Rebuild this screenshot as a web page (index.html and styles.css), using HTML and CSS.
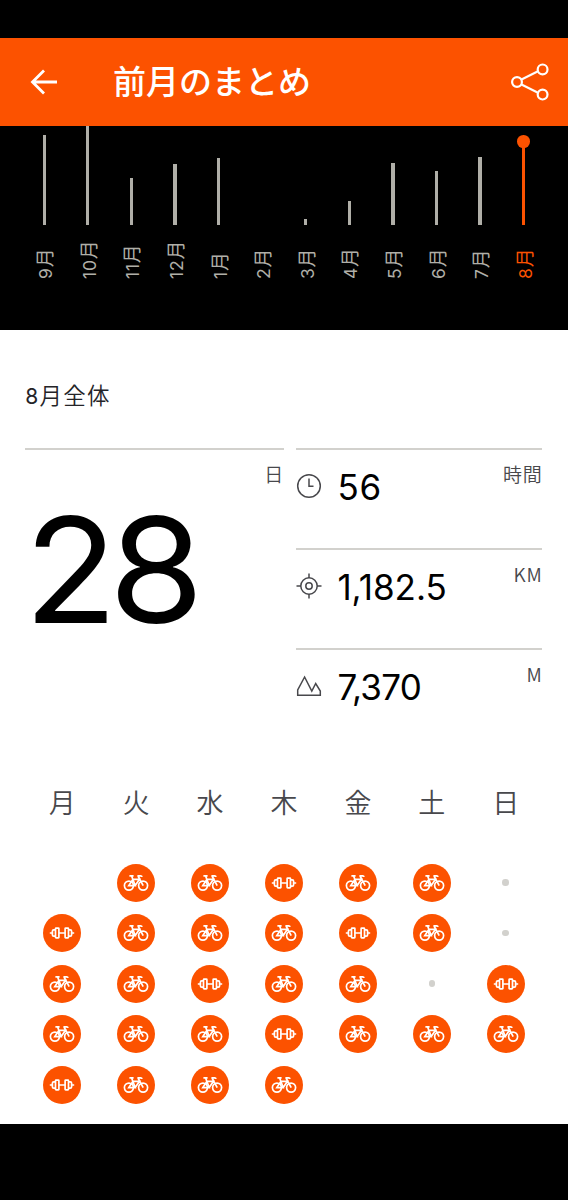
FILE: index.html
```html
<!DOCTYPE html>
<html lang="ja">
<head>
    <meta charset="UTF-8">
    <meta name="viewport" content="width=device-width, initial-scale=1.0">
    <title>前月のまとめ</title>
    <link rel="stylesheet" href="styles.css">
</head>
<body>
    <svg class="sprite" width="0" height="0">
        <symbol id="ride" viewBox="0 0 38 38">
            <circle cx="11.9" cy="21.6" r="4.5"/>
            <circle cx="26.1" cy="21.6" r="4.5"/>
            <path d="M12.4 11.9h4.2M14.6 12l3.6 9.6h-6.4l4.1-6.3h6.6l-4.3 6.3M20.4 11.9h3.2q1.3 0 1.3 1.2M21 12l5.2 9.6"/>
        </symbol>
        <symbol id="weights" viewBox="0 0 38 38">
            <path d="M16 19h6M6.8 19h2.2M29 19h2.2M12.4 15.8h-1.6q-1.4 0-1.4 1.4v3.6q0 1.4 1.4 1.4h1.6M25.6 15.8h1.6q1.4 0 1.4 1.4v3.6q0 1.4-1.4 1.4h-1.6"/>
            <rect x="12.5" y="14.2" width="3.4" height="9.6" rx="0.6"/>
            <rect x="22.1" y="14.2" width="3.4" height="9.6" rx="0.6"/>
        </symbol>
    </svg>

    <header class="app-bar">
        <svg class="back" width="28" height="28" viewBox="0 0 28 28">
            <path d="M27 14H3M14 2.5L2.5 14L14 25.5"/>
        </svg>
        <h1>前月のまとめ</h1>
        <svg class="share" width="40" height="40" viewBox="0 0 40 40">
            <path d="M11 17.8L27.5 9.6M11 22.2L27.5 30.4"/>
            <circle cx="7" cy="20" r="4.9"/>
            <circle cx="32.6" cy="7.4" r="4.9"/>
            <circle cx="32.6" cy="32.6" r="4.9"/>
        </svg>
    </header>

    <section class="chart" id="chart"></section>

    <main class="summary">
        <h2><span>8</span>月全体</h2>
        <div class="stats">
            <div class="days">
                <span class="unit">日</span>
                <span class="total">28</span>
            </div>
            <div class="totals">
                <div class="stat">
                    <svg width="26" height="26" viewBox="0 0 26 26">
                        <circle cx="13" cy="13" r="11.3"/>
                        <path d="M13 5.5V13.2H17.5"/>
                    </svg>
                    <span class="value time">56</span>
                    <span class="unit">時間</span>
                </div>
                <div class="stat">
                    <svg width="26" height="26" viewBox="0 0 26 26">
                        <circle cx="13" cy="13" r="8.2"/>
                        <circle cx="13" cy="13" r="3.2"/>
                        <path d="M13 .5V5M13 21v4.5M.5 13H5M21 13h4.5"/>
                    </svg>
                    <span class="value distance">1,182.5</span>
                    <span class="unit">KM</span>
                </div>
                <div class="stat">
                    <svg width="26" height="26" viewBox="0 0 26 26">
                        <path d="M1.7 22.2V17L8.6 4L15.8 18L19.7 10.5L24.3 18V22.2Z"/>
                    </svg>
                    <span class="value climb">7,370</span>
                    <span class="unit">M</span>
                </div>
            </div>
        </div>
        <div class="weekdays">
            <span>月</span><span>火</span><span>水</span><span>木</span><span>金</span><span>土</span><span>日</span>
        </div>
        <div class="calendar" id="calendar"></div>
    </main>

    <script>
        // Bar height in px for each month
        const months = [
            [9, 90.5], [10, 99], [11, 47.5], [12, 61], [1, 67], [2, 0],
            [3, 6], [4, 24], [5, 62.5], [6, 54], [7, 68], [8, 84]
        ];
        document.getElementById('chart').innerHTML = months.map(([month, height]) => `
            <div class="month ${month === 8 ? 'current' : ''}">
                <div class="bar" style="height: ${height}px"></div>
                <span class="label">${month}<b>月</b></span>
            </div>`).join('');

        // r = ride, w = weights, . = rest day, _ = outside the month
        const days = '_rrwrr.' + 'wrrrwr.' + 'rrwrr.w' + 'rrrwrrr' + 'wrrr___';
        const cells = {
            r: '<svg class="activity"><use href="#ride"/></svg>',
            w: '<svg class="activity"><use href="#weights"/></svg>',
            '.': '<i class="rest"></i>',
            _: ''
        };
        document.getElementById('calendar').innerHTML =
            [...days].map(d => `<div class="day">${cells[d]}</div>`).join('');
    </script>
</body>
</html>
```
FILE: styles.css
```css
* {
    box-sizing: border-box;
}
body {
    margin: 0;
    padding-top: 38px;
    height: 1200px;
    overflow: hidden;
    background: #000;
    font-family: Inter, "Noto Sans CJK JP", sans-serif;
}
svg {
    fill: none;
    stroke: currentColor;
}
.sprite {
    position: absolute;
}
h1, h2 {
    margin: 0;
}
.app-bar {
    display: flex;
    align-items: center;
    height: 88px;
    padding: 0 18px 0 30px;
    background: #fc5200;
    color: #fff;
}
.back {
    stroke-width: 2.8;
}
.app-bar h1 {
    margin-left: 55px;
    font-size: 33px;
    line-height: 48px;
    font-weight: 500;
}
.share {
    margin-left: auto;
    stroke-width: 2.2;
}
.chart {
    display: grid;
    grid-template-columns: repeat(12, 43.6px);
    grid-template-rows: 204px;
    padding-left: 22.4px;
    color: #b0afa8;
}
.month {
    display: flex;
    flex-direction: column;
    align-items: center;
}
.bar {
    flex: none;
    width: 3.3px;
    margin-top: auto;
    background: currentColor;
}
.label {
    flex: none;
    height: 54px;
    margin: 0 0 51px 4px;
    line-height: 24px;
    font-size: 17.5px;
    letter-spacing: 0.8px;
    writing-mode: vertical-rl;
    text-orientation: sideways;
    transform: rotate(180deg);
}
.label b {
    font-size: 19px;
    font-weight: 400;
}
.current {
    color: #fc5200;
}
.current .bar {
    position: relative;
}
.current .bar::before {
    content: "";
    position: absolute;
    top: -6px;
    left: -4.7px;
    width: 12.7px;
    height: 12.7px;
    border-radius: 50%;
    background: #fc5200;
}
.summary {
    height: 794px;
    padding: 48px 25.3px 0;
    background: #fff;
}
.summary h2 {
    height: 70px;
    font-size: 22.5px;
    line-height: 35px;
    font-weight: 350;
    letter-spacing: 1.2px;
    color: #242428;
}
.summary h2 span {
    font-size: 21px;
    font-weight: 400;
}
.stats {
    display: grid;
    grid-template-columns: 258.7px 246px;
    gap: 12.4px;
}
.days {
    display: flex;
    flex-direction: column;
    border-top: 2px solid #d2d1cd;
}
.unit {
    font-family: "Noto Sans CJK JP", sans-serif;
    font-size: 19px;
    line-height: 28px;
    font-weight: 350;
    letter-spacing: 0.7px;
    color: #48484c;
}
.days .unit {
    margin-top: 10px;
    text-align: right;
}
.total {
    margin: 2px 0 0 -1px;
    font-size: 146px;
    line-height: 160px;
    letter-spacing: -8px;
    transform: scaleX(1.05);
    transform-origin: left;
}
.stat {
    display: flex;
    align-items: flex-start;
    height: 100px;
    padding-top: 10px;
    border-top: 2px solid #d2d1cd;
}
.stat svg {
    margin-top: 13px;
    color: #48484c;
    stroke-width: 1.5;
}
.value {
    margin: 6px 0 0 15px;
    font-size: 35px;
    line-height: 42px;
}
.time {
    letter-spacing: 0.9px;
}
.climb {
    letter-spacing: -0.8px;
}
.stat .unit {
    margin-left: auto;
}
.weekdays, .calendar {
    display: grid;
    grid-template-columns: repeat(7, 1fr);
    justify-items: center;
}
.weekdays {
    margin-top: 36px;
    font-size: 27px;
    line-height: 40px;
    font-weight: 350;
    color: #48484c;
}
.calendar {
    grid-auto-rows: 50.5px;
    margin-top: 33.3px;
}
.day {
    display: flex;
    align-items: center;
}
.activity {
    width: 38px;
    height: 38px;
    border-radius: 50%;
    background: #fc5200;
    color: #fff;
    stroke-width: 1.7;
}
.rest {
    width: 6.5px;
    height: 6.5px;
    border-radius: 50%;
    background: #d2d1cd;
}
```
